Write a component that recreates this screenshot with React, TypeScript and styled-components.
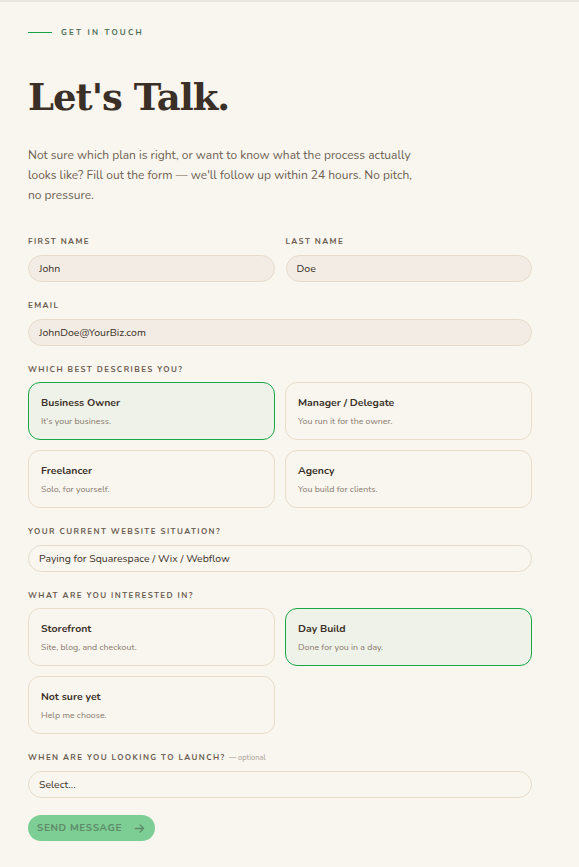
import React, { useState } from "react";
import styled, { createGlobalStyle } from "styled-components";

const GlobalStyle = createGlobalStyle`
  html, body {
    margin: 0;
    padding: 0;
    background: #f9f6f0;
  }
  body {
    font-family: "Nunito", "Lato", "Noto Sans", sans-serif;
    color: #3b3128;
  }
  * { box-sizing: border-box; }
`;

interface optionInter {
  title: string;
  desc: string;
}

const roles: optionInter[] = [
  { title: "Business Owner", desc: "It's your business." },
  { title: "Manager / Delegate", desc: "You run it for the owner." },
  { title: "Freelancer", desc: "Solo, for yourself." },
  { title: "Agency", desc: "You build for clients." },
];

const interests: optionInter[] = [
  { title: "Storefront", desc: "Site, blog, and checkout." },
  { title: "Day Build", desc: "Done for you in a day." },
  { title: "Not sure yet", desc: "Help me choose." },
];

function OptionGrid({
  options,
  selected,
  onPick,
}: {
  options: optionInter[];
  selected: string;
  onPick: (t: string) => void;
}) {
  return (
    <Grid>
      {options.map((o) => (
        <Option key={o.title} active={o.title === selected} onClick={() => onPick(o.title)}>
          <OptionTitle>{o.title}</OptionTitle>
          <OptionDesc>{o.desc}</OptionDesc>
        </Option>
      ))}
    </Grid>
  );
}

export default function App() {
  const [role, setRole] = useState("Business Owner");
  const [interest, setInterest] = useState("Day Build");

  return (
    <Page>
      <GlobalStyle />
      <Eyebrow>
        <span />
        GET IN TOUCH
      </Eyebrow>
      <Heading>Let's Talk.</Heading>
      <Intro>
        Not sure which plan is right, or want to know what the process actually
        looks like? Fill out the form — we'll follow up within 24 hours. No pitch,
        no pressure.
      </Intro>

      <Form>
        <Row>
          <Field>
            <Label>First name</Label>
            <Input defaultValue="John" />
          </Field>
          <Field>
            <Label>Last name</Label>
            <Input defaultValue="Doe" />
          </Field>
        </Row>
        <Field>
          <Label>Email</Label>
          <Input defaultValue="JohnDoe@YourBiz.com" />
        </Field>
        <Field>
          <Label>Which best describes you?</Label>
          <OptionGrid options={roles} selected={role} onPick={setRole} />
        </Field>
        <Field>
          <Label>Your current website situation?</Label>
          <Select>Paying for Squarespace / Wix / Webflow</Select>
        </Field>
        <Field>
          <Label>What are you interested in?</Label>
          <OptionGrid options={interests} selected={interest} onPick={setInterest} />
        </Field>
        <Field>
          <Label>
            When are you looking to launch?<Optional>— optional</Optional>
          </Label>
          <Select>Select...</Select>
        </Field>
        <SendButton type="button">
          SEND MESSAGE
          <svg width="11" height="11" viewBox="0 0 12 12" fill="none">
            <path
              d="M1.5 6h9M6.5 2l4 4-4 4"
              stroke="currentColor"
              strokeWidth="1.4"
              strokeLinecap="round"
              strokeLinejoin="round"
            />
          </svg>
        </SendButton>
      </Form>
    </Page>
  );
}

const Page = styled.div`
  min-height: 867px;
  padding: 25px 47px 40px 28px;
  border-top: 2px solid #e8e4df;
`;

const Eyebrow = styled.div`
  display: flex;
  align-items: center;
  gap: 9px;
  font-size: 8px;
  font-weight: 700;
  letter-spacing: 2.2px;
  color: #4d6b58;

  span {
    display: block;
    width: 24px;
    height: 1px;
    background: #18a645;
  }
`;

const Heading = styled.h1`
  margin: 41px 0 0;
  font-family: "DejaVu Serif", "Liberation Serif", serif;
  font-size: 37px;
  font-weight: 700;
  letter-spacing: -1px;
  line-height: 1;
  color: #3a3027;
`;

const Intro = styled.p`
  margin: 29px 0 0;
  max-width: 392px;
  font-size: 12px;
  line-height: 20px;
  color: #6e5f51;
`;

const Form = styled.form`
  display: flex;
  flex-direction: column;
  gap: 18px;
  margin-top: 31px;
`;

const Row = styled.div`
  display: grid;
  grid-template-columns: 1fr 1fr;
  gap: 11px;
`;

const Field = styled.div`
  display: flex;
  flex-direction: column;
  gap: 8px;
`;

const Label = styled.label`
  font-size: 8px;
  font-weight: 700;
  letter-spacing: 1.4px;
  text-transform: uppercase;
  color: #6a5b4e;
`;

const Optional = styled.span`
  margin-left: 3px;
  font-size: 7.5px;
  font-weight: 400;
  letter-spacing: 0;
  text-transform: none;
  color: #aaa095;
`;

const Input = styled.input`
  height: 27px;
  padding: 0 10px;
  border: 1px solid #e6dbcb;
  border-radius: 14px;
  background: #f3ece4;
  font-family: inherit;
  font-size: 10.5px;
  color: #3b3128;
  outline: none;
`;

const Select = styled.div`
  display: flex;
  align-items: center;
  height: 27px;
  padding: 0 10px;
  border: 1px solid #e6dbcb;
  border-radius: 14px;
  background: #f9f6f0;
  font-size: 10.5px;
  color: #3b3128;
`;

const Grid = styled.div`
  display: grid;
  grid-template-columns: 1fr 1fr;
  gap: 10px 10px;
  margin-top: -1px;
`;

const Option = styled.div<{ active: boolean }>`
  display: flex;
  flex-direction: column;
  justify-content: center;
  gap: 5px;
  height: 58px;
  padding: 0 12px;
  border: 1px solid ${(p) => (p.active ? "#17a846" : "#e8dccb")};
  border-radius: 12px;
  background: ${(p) => (p.active ? "#eff2e9" : "transparent")};
  cursor: pointer;
`;

const OptionTitle = styled.div`
  font-size: 10.5px;
  font-weight: 700;
  color: #3a3027;
`;

const OptionDesc = styled.div`
  font-size: 8.8px;
  color: #85786b;
`;

const SendButton = styled.button`
  display: inline-flex;
  align-items: center;
  gap: 12px;
  align-self: flex-start;
  height: 26px;
  margin-top: -1px;
  padding: 0 10px 0 9px;
  border: none;
  border-radius: 13px;
  background: #7dce94;
  font-family: inherit;
  font-size: 10px;
  font-weight: 700;
  letter-spacing: 0.6px;
  color: #5e8a6a;
  cursor: pointer;
`;
